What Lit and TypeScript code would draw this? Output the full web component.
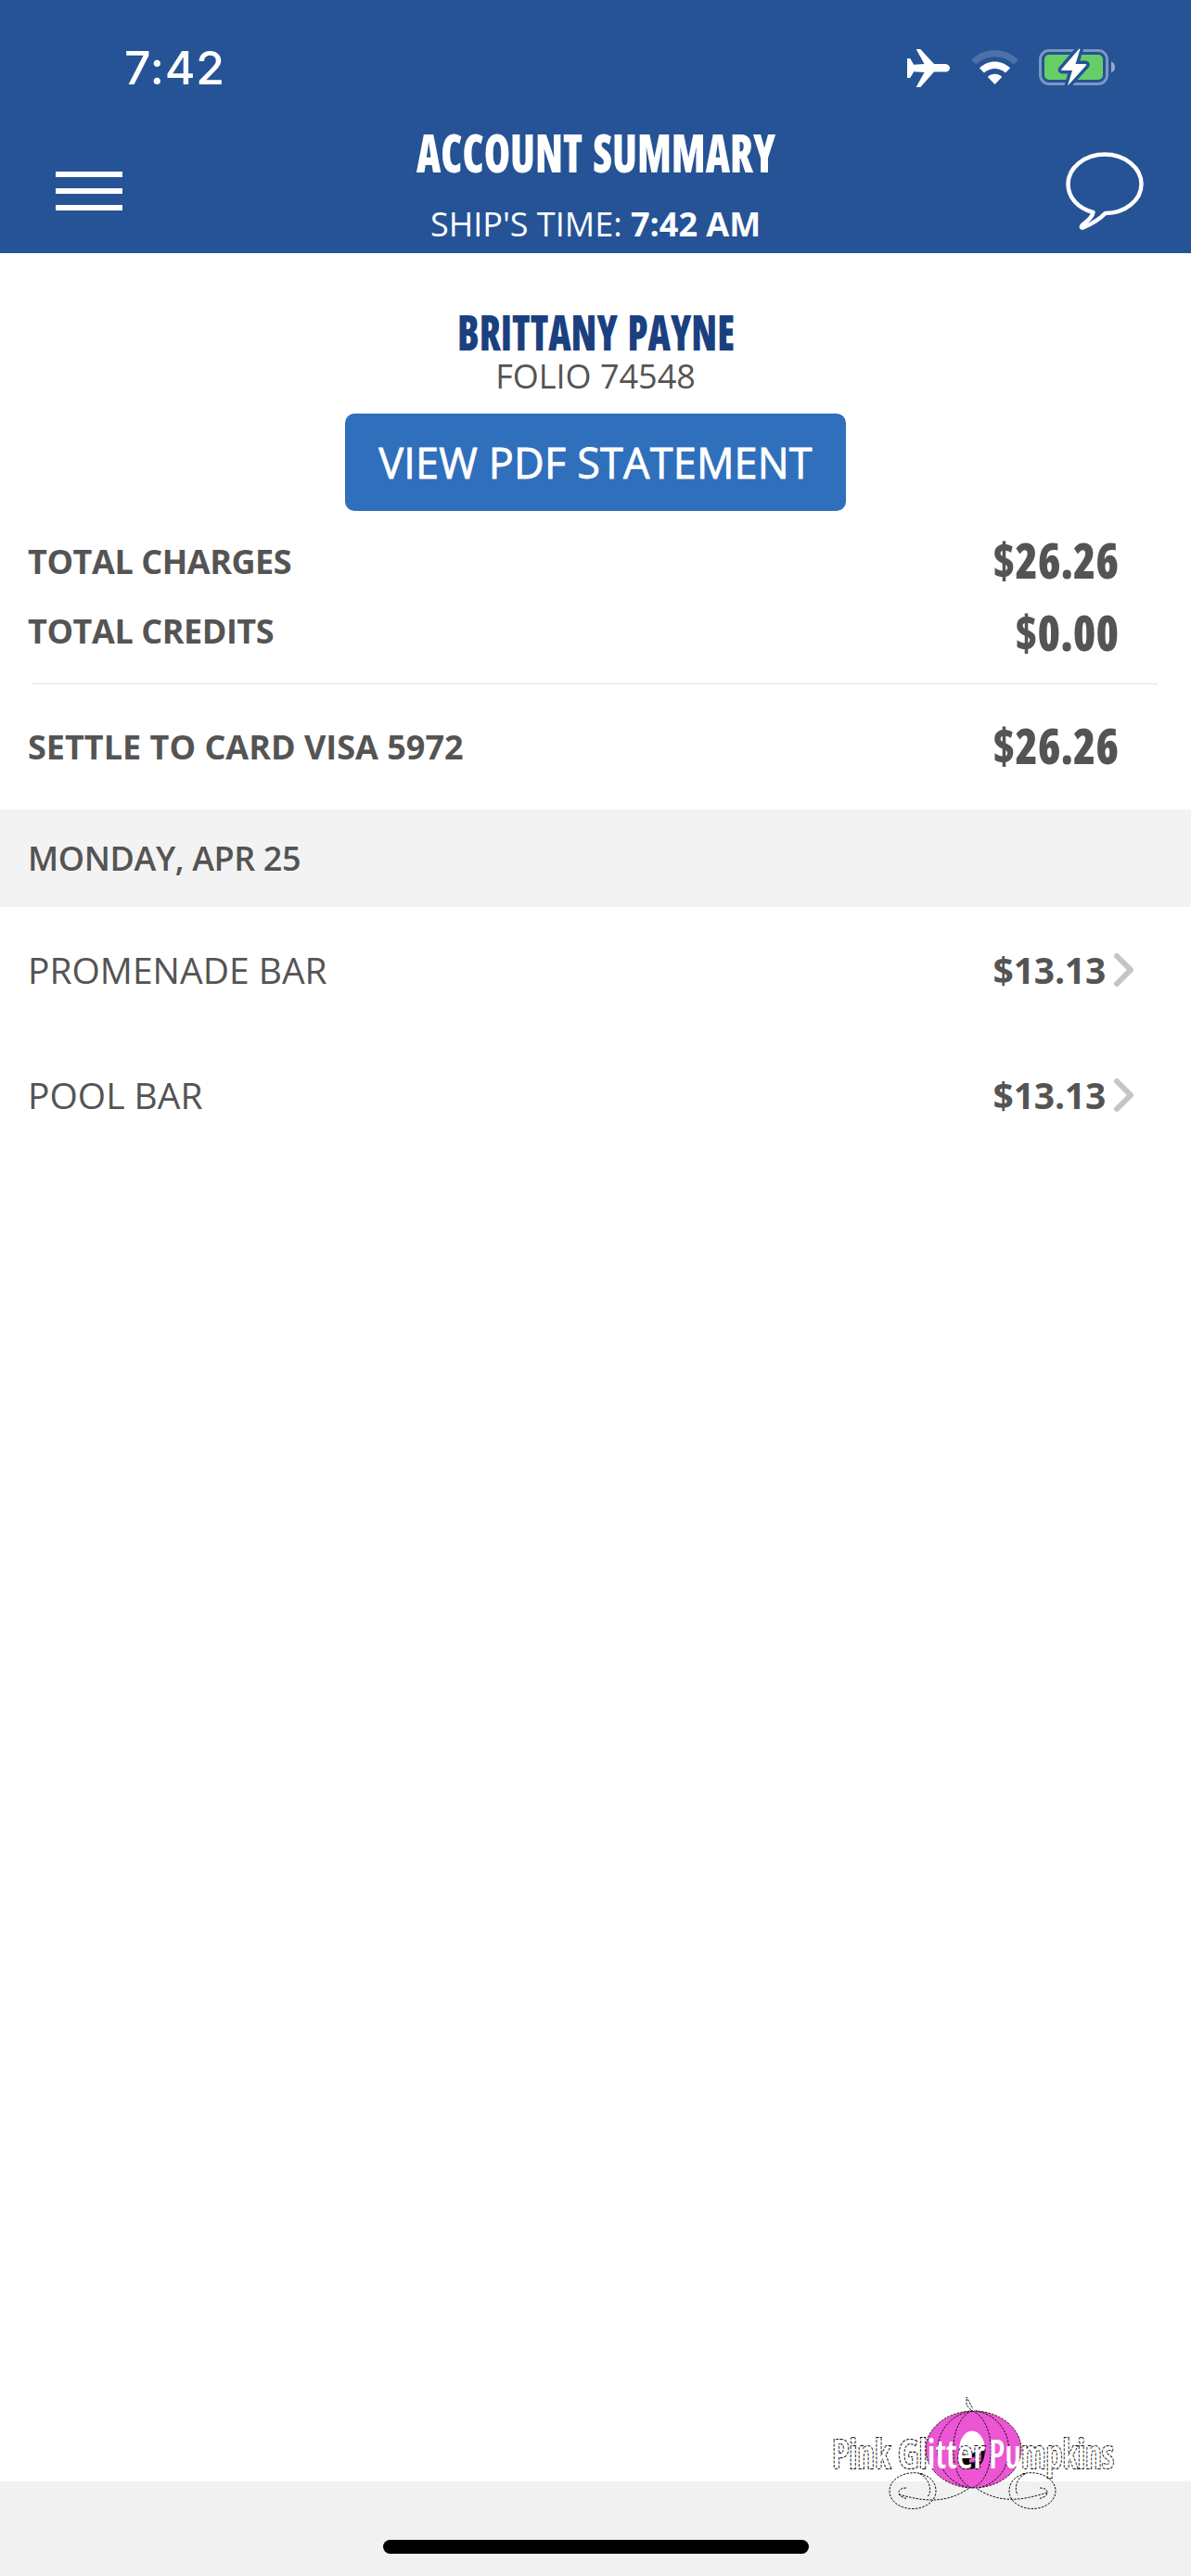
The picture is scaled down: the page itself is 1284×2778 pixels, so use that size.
import { LitElement, html, svg, css } from 'lit';
import { customElement, property } from 'lit/decorators.js';

interface Charge {
  place: string;
  amount: string;
}

/* Condensed heading text, squeezed to a fixed width. Its box is as tall as the capitals. */
@customElement('condensed-text')
export class CondensedText extends LitElement {
  @property() text = '';

  @property({ type: Number }) width = 100;

  @property({ type: Number }) cap = 38;

  @property({ type: Number }) bearing = 0;

  static styles = css`
    :host {
      display: block;
      font-family: 'Open Sans', 'Liberation Sans', sans-serif;
      font-stretch: 75%;
      font-weight: 800;
      word-spacing: 4px;
    }

    svg {
      display: block;
      overflow: visible;
    }

    text {
      fill: currentColor;
    }
  `;

  render() {
    return html`
      <svg width=${this.width} height=${this.cap}>
        <text
          x=${-this.bearing}
          y=${this.cap}
          font-size=${this.cap / 0.714}
          textLength=${this.width + this.bearing * 2}
          lengthAdjust="spacingAndGlyphs"
        >${this.text}</text>
      </svg>
    `;
  }
}

@customElement('status-bar')
export class StatusBar extends LitElement {
  static styles = css`
    :host {
      display: flex;
      align-items: center;
      justify-content: space-between;
      height: 146px;
      padding: 0 82px 0 134px;
      font: 500 50px/60px Inter, 'Liberation Sans', sans-serif;
      letter-spacing: 0.800px;
    }

    .icons {
      display: flex;
      gap: 22px;
    }

    svg {
      display: block;
    }
  `;

  render() {
    return html`
      <span>7:42</span>
      <div class="icons">
        <svg width="47" height="42" viewBox="978 52 47 42" fill="#fff">
          <path
            d="M978 63h3.2l4 6.8 11.3-.7-8.8-16.1h4.6L1007 69h11.4c3.2 0 5.6 2 5.6 4.400s-2.400 4.200-5.600 4.200H1007L992.300 94H987.700l8.800-16-11.300-.7-4 6.700H978z"
          />
        </svg>
        <svg width="51" height="42" viewBox="1047 52 51 42" fill="#fff">
          <path
            opacity=".18"
            d="M1047.300 64.500c14-14 36.500-14 50.500 0l-5 5c-11.200-11-29.300-11-40.500 0z"
          />
          <path d="M1056 73.500c9-9.300 24-9.300 33 0l-5 5c-6.500-6-16.500-6-23 0z" />
          <path d="M1064.800 83c4.300-4.400 11.100-4.400 15.400 0l-7.700 8z" />
        </svg>
        <svg width="82" height="42" viewBox="1120 52 82 42">
          <rect
            x="1121.500" y="54.500" width="72" height="36" rx="9.500"
            fill="none" stroke="#7c98bf" stroke-width="3"
          />
          <path d="M1198 66.500c5.400 1.500 5.400 10.500 0 12z" fill="#93a9ca" />
          <rect x="1126" y="59" width="63" height="27" rx="5" fill="#67ce67" />
          <path
            d="M1163.500 52.500 1144.500 74.500q-1 1.500 1 1.500h10.500l-5 16.500 20-22q1-1.500-1-1.500h-10.500l5-16z"
            fill="#fff" stroke="#255396" stroke-width="7" stroke-linejoin="round" paint-order="stroke"
          />
        </svg>
      </div>
    `;
  }
}

@customElement('pumpkin-watermark')
export class PumpkinWatermark extends LitElement {
  static styles = css`
    :host {
      display: block;
    }

    svg {
      display: block;
      overflow: visible;
    }

    .line {
      fill: none;
      stroke: #111;
      stroke-width: 1;
      stroke-dasharray: 2.500 1.300;
    }

    .name {
      font-family: 'Open Sans', 'Liberation Sans', sans-serif;
      font-stretch: 75%;
      font-weight: 600;
      font-size: 43px;
      fill: #fff;
    }

    .outlined {
      stroke: #111;
      stroke-width: 2.200;
      stroke-dasharray: 3 1.500;
      paint-order: stroke;
    }
  `;

  word(x: number, width: number, text: unknown) {
    return svg`<text class="name" x=${x} y="2661.500" textLength=${width} lengthAdjust="spacingAndGlyphs">${text}</text>`;
  }

  render() {
    return html`
      <svg width="310" height="130" viewBox="896 2580 310 130">
        <ellipse cx="1049.500" cy="2641.500" rx="51.500" ry="41.500" fill="#ec55d3" />
        <ellipse class="line" cx="1049.500" cy="2641.500" rx="51.500" ry="41.500" />
        <path
          class="line"
          d="M1048 2600C1000 2608 998 2672 1045 2683M1048 2600c-27 10-27 74 0 83M1048 2600c27 10 27 74 0 83M1052 2600c46 8 48 72 3 83M1047 2599l-5-5v-9l7 13"
        />
        <ellipse cx="1048" cy="2642" rx="14" ry="20.500" fill="#fff" />
        <path d="M1062 2642c0 27-28 27-28 3l9 4 12-7z" fill="#000" />
        <path d="M1045 2651c5-1 9-3 13-7v10l-13 2z" fill="#ec55d3" />
        <path
          class="line"
          d="M995 2668c-18-5-36 5-36 18 0 12 12 19.500 25 19.500s25-8 25-19c0-10-7-17-18-19 10 4 15 18 9 25M977 2683c-8 0-10 5-6 9l7 3M969 2690c28 8 52 10 76-7M1102 2668c18-5 36 5 36 18 0 12-12 19.500-25 19.500s-25-8-25-19c0-10 7-17 18-19-10 4-13 16-9 23M1121 2683c8 0 10 5 6 9l-7 3M1129 2688c-28 9-52 12-77-5"
        />
        ${this.word(897, 63, svg`<tspan class="outlined">Pink</tspan>`)}
        ${this.word(968, 94, svg`<tspan class="outlined">Gl</tspan><tspan>itt</tspan><tspan class="outlined">er</tspan>`)}
        ${this.word(1066, 135, svg`<tspan>Pu</tspan><tspan class="outlined">mpkins</tspan>`)}
      </svg>
    `;
  }
}

@customElement('app-root')
export class AppRoot extends LitElement {
  charges: Charge[] = [
    { place: 'PROMENADE BAR', amount: '$13.13' },
    { place: 'POOL BAR', amount: '$13.13' },
  ];

  static styles = css`
    :host {
      display: flex;
      flex-direction: column;
      position: relative;
      box-sizing: border-box;
      width: 1284px;
      height: 2778px;
      overflow: hidden;
      background: #fff;
      color: #545454;
      font: 400 36px/52px 'Open Sans', 'Liberation Sans', sans-serif;
    }

    header {
      height: 273px;
      background: #255396;
      color: #fff;
    }

    .nav {
      display: grid;
      grid-template-columns: 100px 1fr 109px;
      height: 120px;
      padding: 0 51px 0 60px;
    }

    .menu {
      display: flex;
      flex-direction: column;
      justify-content: center;
      gap: 12px;
      width: 72px;
    }

    .menu span {
      height: 6px;
      background: #fff;
    }

    .titles,
    .guest {
      display: flex;
      flex-direction: column;
      align-items: center;
    }

    .time {
      margin-top: 32px;
      line-height: 48px;
      white-space: nowrap;
    }

    .time b {
      font-weight: 700;
    }

    .chat {
      place-self: center end;
    }

    .guest {
      padding-top: 67px;
    }

    .guest-name {
      color: #1b4080;
    }

    .folio {
      margin-top: 10px;
      line-height: 36px;
    }

    button {
      width: 540px;
      height: 105px;
      margin: 22px 0 29px;
      padding: 0;
      border: 0;
      border-radius: 10px;
      background: #306fbc;
      color: #fff;
      font: 500 45px/105px 'Open Sans', 'Liberation Sans', sans-serif;
      letter-spacing: 0.200px;
      white-space: nowrap;
      -webkit-text-stroke: 0.800px #fff;
    }

    .total {
      display: flex;
      justify-content: space-between;
      align-items: flex-start;
      height: 75px;
      padding: 0 79px 0 30px;
      font-weight: 700;
      letter-spacing: -0.450px;
    }

    .total condensed-text {
      margin-top: 6px;
      font-weight: 800;
      letter-spacing: 0;
    }

    .credits {
      height: 82px;
    }

    .credits condensed-text {
      margin-top: 9px;
    }

    .settle {
      height: 93px;
      letter-spacing: 0;
    }

    hr {
      height: 1px;
      margin: 0 36px 42px 35px;
      border: 0;
      background: #e0e0e0;
    }

    .day {
      height: 105px;
      padding-left: 30px;
      background: #f3f3f3;
      font-weight: 600;
      line-height: 105px;
      letter-spacing: -0.400px;
    }

    .charge {
      display: flex;
      align-items: center;
      height: 135px;
      padding: 0 62px 0 30px;
      font-size: 39px;
      line-height: 135px;
    }

    .charge .amount {
      margin-left: auto;
      margin-right: 8px;
      font-weight: 700;
      letter-spacing: -0.200px;
    }

    footer {
      display: flex;
      justify-content: center;
      align-items: flex-end;
      box-sizing: border-box;
      height: 102px;
      margin-top: auto;
      padding-bottom: 24px;
      background: #f1f1f1;
    }

    .home {
      width: 459px;
      height: 15px;
      border-radius: 8px;
      background: #000;
    }

    pumpkin-watermark {
      position: absolute;
      left: 896px;
      top: 2580px;
    }
  `;

  renderCharge(charge: Charge) {
    return html`
      <div class="charge">
        <span>${charge.place}</span>
        <span class="amount">${charge.amount}</span>
        <svg width="22" height="38" viewBox="0 0 22 38">
          <path
            d="M4 4l15 15L4 34"
            fill="none" stroke="#c5c5c7" stroke-width="6" stroke-linecap="round" stroke-linejoin="round"
          />
        </svg>
      </div>
    `;
  }

  render() {
    return html`
      <header>
        <status-bar></status-bar>
        <div class="nav">
          <div class="menu"><span></span><span></span><span></span></div>
          <div class="titles">
            <condensed-text text="ACCOUNT SUMMARY" width="387" cap="40"></condensed-text>
            <div class="time">SHIP'S TIME: <b>7:42 AM</b></div>
          </div>
          <svg class="chat" width="84" height="84" viewBox="0 0 84 84">
            <path
              d="M29.500 65C13 60.500 2.500 49 2.500 34.500 2.500 17 20 2.500 42 2.500s39.500 14.500 39.500 32S64 66 42.500 66C36 73 28 77.500 18.500 81.500c-2.500.5-2-1.500-.5-3C24 74 29 69 29.500 65z"
              fill="none" stroke="#fff" stroke-width="4.500" stroke-linejoin="round"
            />
          </svg>
        </div>
      </header>
      <section class="guest">
        <condensed-text class="guest-name" text="BRITTANY PAYNE" width="295" cap="38" bearing="2"></condensed-text>
        <div class="folio">FOLIO 74548</div>
        <button>VIEW PDF STATEMENT</button>
      </section>
      <div class="total">
        <span>TOTAL CHARGES</span>
        <condensed-text text="$26.26" width="134" cap="38" bearing="1"></condensed-text>
      </div>
      <div class="total credits">
        <span>TOTAL CREDITS</span>
        <condensed-text text="$0.00" width="110" cap="38" bearing="1"></condensed-text>
      </div>
      <hr />
      <div class="total settle">
        <span>SETTLE TO CARD VISA 5972</span>
        <condensed-text text="$26.26" width="134" cap="38" bearing="1"></condensed-text>
      </div>
      <div class="day">MONDAY, APR 25</div>
      ${this.charges.map(charge => this.renderCharge(charge))}
      <footer><div class="home"></div></footer>
      <pumpkin-watermark></pumpkin-watermark>
    `;
  }
}
